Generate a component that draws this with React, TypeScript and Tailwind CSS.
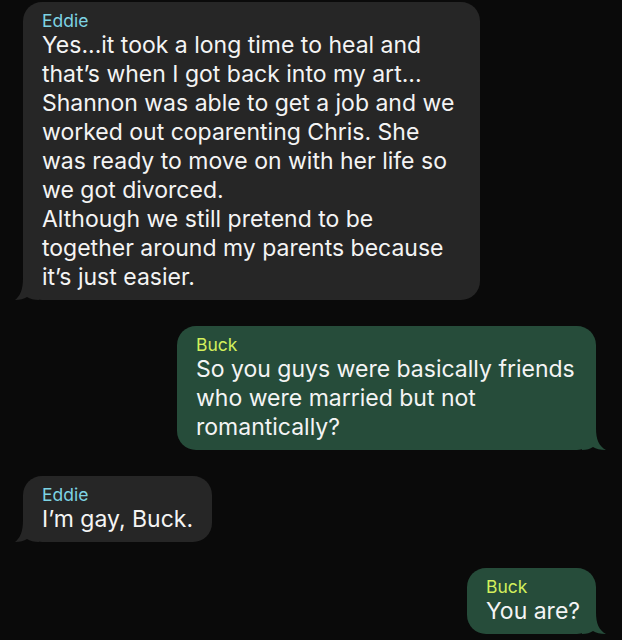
import React from 'react'

type Msg = {
  from: 'Eddie' | 'Buck'
  lines: string[]
  width: string
}

const messages: Msg[] = [
  {
    from: 'Eddie',
    width: 'w-[457px]',
    lines: [
      'Yes...it took a long time to heal and',
      'that’s when I got back into my art...',
      'Shannon was able to get a job and we',
      'worked out coparenting Chris. She',
      'was ready to move on with her life so',
      'we got divorced.',
      'Although we still pretend to be',
      'together around my parents because',
      'it’s just easier.',
    ],
  },
  {
    from: 'Buck',
    width: 'w-[419px]',
    lines: ['So you guys were basically friends', 'who were married but not', 'romantically?'],
  },
  { from: 'Eddie', width: 'w-[189px]', lines: ['I’m gay, Buck.'] },
  { from: 'Buck', width: 'w-[129px]', lines: ['You are?'] },
]

function Tail({ side, color }: { side: 'left' | 'right'; color: string }) {
  // little curled tail at the bottom corner of the bubble
  if (side === 'left') {
    return (
      <svg className="absolute -left-[8px] bottom-0 w-[24px] h-[22px]" viewBox="0 0 24 22">
        <path d="M8 0 C8 12 5 18 0 22 C5 22 9 21 12 19 C15 21 19 22 24 22 L24 0 Z" fill={color} />
      </svg>
    )
  }
  return (
    <svg className="absolute -right-[10px] bottom-0 w-[24px] h-[22px]" viewBox="0 0 24 22">
      <path d="M14 0 C14 12 17 18 24 22 C18 22 14 21 11 19 C8 21 5 22 0 22 L0 0 Z" fill={color} />
    </svg>
  )
}

function Bubble({ msg }: { msg: Msg }) {
  const mine = msg.from === 'Buck'
  const bg = mine ? '#264c3a' : '#262626'
  return (
    <div className={`flex ${mine ? 'justify-end' : 'justify-start'}`}>
      <div
        className={`relative ${msg.width} rounded-[19px] pl-[19px] pr-[12px] pt-2 pb-2 ${mine ? 'bg-[#264c3a]' : 'bg-[#262626]'}`}
      >
        <Tail side={mine ? 'right' : 'left'} color={bg} />
        <div className="relative">
          <div className={`text-[17.5px] leading-[21px] ${mine ? 'text-[#d3ef5c]' : 'text-[#7dd3e3]'}`}>{msg.from}</div>
          {msg.lines.map((l, i) => (
            <div key={i} className="text-[23px] leading-[29px] text-[#f4f4f4] whitespace-nowrap">
              {l}
            </div>
          ))}
        </div>
      </div>
    </div>
  )
}

export default function App() {
  return (
    <div
      className="w-[622px] h-[640px] overflow-hidden bg-[#0a0a0a] pl-[23px] pr-[26px] pt-[2px] flex flex-col gap-[26px]"
      style={{ fontFamily: 'Inter, "Noto Sans", sans-serif' }}
    >
      {messages.map((m, i) => (
        <Bubble key={i} msg={m} />
      ))}
    </div>
  )
}
